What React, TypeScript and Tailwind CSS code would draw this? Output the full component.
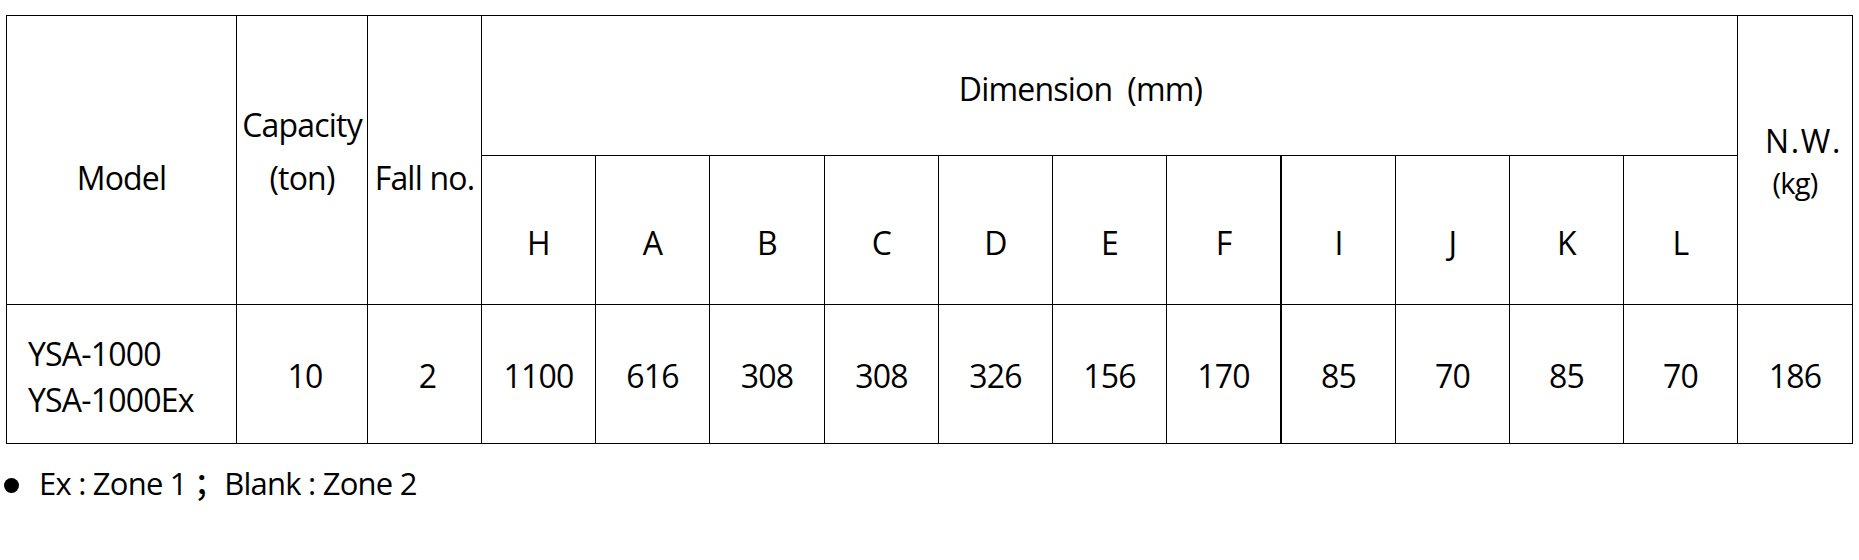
import React from "react";

const font = { fontFamily: '"Open Sans", "Noto Sans CJK SC", sans-serif' };

const letters = ["H", "A", "B", "C", "D", "E", "F", "I", "J", "K", "L"];
const values = ["1100", "616", "308", "308", "326", "156", "170", "85", "70", "85", "70"];

export default function App() {
  return (
    <div className="min-h-[560px] w-[1859px] bg-white text-black" style={font}>
      <div className="pl-[6px] pt-[15px]">
        <div className="grid w-[1847px] grid-cols-[230px_131px_114px_114px_114px_115px_114px_114px_114px_115px_114px_114px_114px_114px_115px] grid-rows-[140px_149px_139px] border-l border-t border-black text-[32px] font-medium tracking-[-0.025em]">
          {/* Header row 1 */}
          <div className="col-start-1 row-span-2 row-start-1 flex items-center justify-center border-b border-r border-black pt-[35px] leading-[40px]">
            Model
          </div>
          <div className="col-start-2 row-span-2 row-start-1 flex flex-col items-center justify-center border-b border-r border-black pb-[18px] leading-[53px]">
            <span>Capacity</span>
            <span>(ton)</span>
          </div>
          <div className="col-start-3 row-span-2 row-start-1 flex items-center justify-center border-b border-r border-black pt-[35px] leading-[40px]">
            Fall no.
          </div>
          <div className="col-span-11 col-start-4 row-start-1 flex items-center justify-center border-b border-r border-black pr-[58px] pt-[6px] leading-[40px]">
            <span className="whitespace-pre">Dimension  (mm)</span>
          </div>
          <div className="col-start-15 row-span-2 row-start-1 flex flex-col items-center border-b border-r border-black pt-[103px]">
            <span className="pl-[17px] text-[32px] leading-[44px] tracking-[0.05em]">N.W.</span>
            <span className="text-[29px] leading-[40px]">(kg)</span>
          </div>

          {/* Header row 2 */}
          {letters.map((l) => (
            <div
              key={l}
              className={
                "row-start-2 flex items-center justify-center border-b border-black pt-[25px] leading-[40px] " +
                (l === "F" ? "border-r-2" : "border-r")
              }
            >
              {l}
            </div>
          ))}

          {/* Data row */}
          <div className="row-start-3 flex flex-col justify-center border-b border-r border-black pl-[21px] pt-[5px] leading-[46px]">
            <span>YSA-1000</span>
            <span>YSA-1000Ex</span>
          </div>
          <div className="row-start-3 flex items-center justify-center border-b border-r border-black pl-[6px] pt-[3px] leading-[40px]">
            10
          </div>
          <div className="row-start-3 flex items-center justify-center border-b border-r border-black pl-[6px] pt-[3px] leading-[40px]">
            2
          </div>
          {values.map((v, i) => (
            <div
              key={i}
              className={
                "row-start-3 flex items-center justify-center border-b border-black pt-[3px] leading-[40px] " +
                (i === 6 ? "border-r-2" : "border-r")
              }
            >
              {v}
            </div>
          ))}
          <div className="row-start-3 flex items-center justify-center border-b border-r border-black pt-[3px] leading-[40px]">
            186
          </div>
        </div>
      </div>

      <div className="mt-[19px] flex items-center gap-[20px] pl-[4px] text-[31px] font-medium leading-[40px] tracking-[-0.025em]">
        <span className="mt-[5px] h-[15px] w-[15px] rounded-full bg-black" />
        <span className="whitespace-pre">Ex : Zone 1 ；Blank : Zone 2</span>
      </div>
    </div>
  );
}
